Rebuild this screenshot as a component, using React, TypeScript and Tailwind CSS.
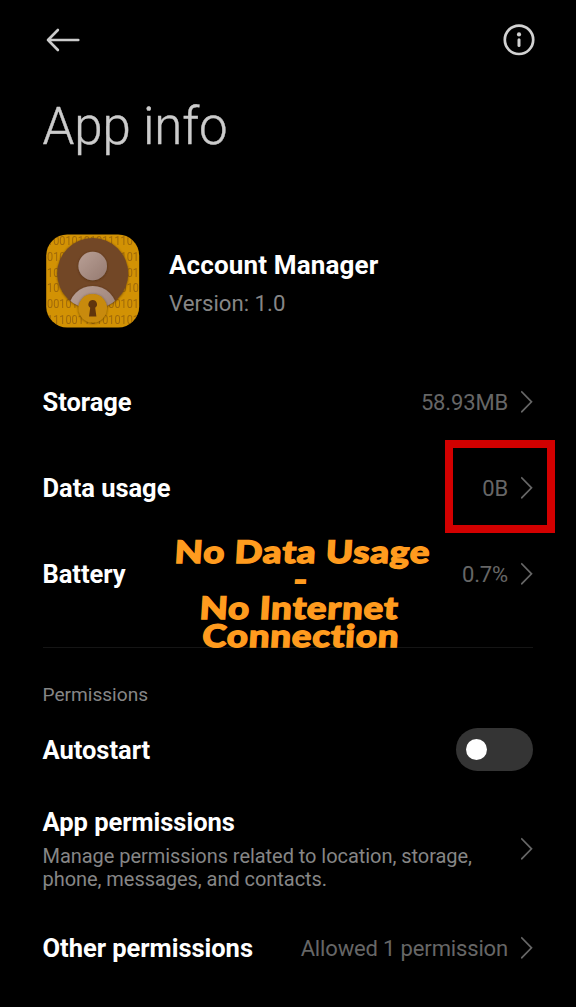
import type { ReactNode } from "react";

function Chevron() {
  return (
    <svg className="ml-[13px] h-6 w-3 shrink-0" viewBox="0 0 12 24" fill="none">
      <path d="M0.2 1.3 L10.5 11.8 L0.2 22.3" stroke="#666666" strokeWidth="1.7" />
    </svg>
  );
}

function BackArrow() {
  return (
    <svg className="h-6 w-[34px]" viewBox="0 0 34 24" fill="none">
      <path
        d="M32.3 12 H2 M11.9 2 L2 12 L11.9 22"
        stroke="#cccccc"
        strokeWidth="2.6"
        strokeLinecap="round"
        strokeLinejoin="round"
      />
    </svg>
  );
}

function InfoIcon() {
  return (
    <svg className="h-8 w-8" viewBox="0 0 32 32" fill="none">
      <circle cx="16" cy="15.8" r="14.2" stroke="#d2d2d2" strokeWidth="2.7" />
      <circle cx="16" cy="10.4" r="2.1" fill="#d2d2d2" />
      <path d="M16 15.8 V21.4" stroke="#d2d2d2" strokeWidth="3" strokeLinecap="round" />
    </svg>
  );
}

const binaryRows = [
  "100101010111101",
  "010110100101101",
  "101011010110101",
  "101001001011010",
  "001011010100101",
  "111001101010101",
];

function AppIcon() {
  return (
    <svg className="h-[94px] w-[94px] shrink-0" viewBox="0 0 94 94">
      <defs>
        <clipPath id="tile">
          <rect x="0.2" y="0.5" width="93" height="93" rx="21" />
        </clipPath>
        <clipPath id="disc">
          <circle cx="46.7" cy="39.5" r="35.5" />
        </clipPath>
        <linearGradient id="person" x1="0" y1="0" x2="1" y2="1">
          <stop offset="0" stopColor="#b9a096" />
          <stop offset="1" stopColor="#957a70" />
        </linearGradient>
        <filter id="shade" x="-20%" y="-20%" width="140%" height="140%">
          <feDropShadow dx="0" dy="0.5" stdDeviation="1.3" floodColor="#402000" floodOpacity="0.7" />
        </filter>
      </defs>
      <g clipPath="url(#tile)">
        <rect width="94" height="94" fill="#d29204" />
        <g fill="#94600c" fontFamily="Roboto, sans-serif" fontSize="13">
          {binaryRows.map((row, i) => (
            <text
              key={i}
              x="1"
              y={11.3 + i * 15.7}
              textLength="92"
              lengthAdjust="spacingAndGlyphs"
              opacity="0.8"
            >
              {row}
            </text>
          ))}
        </g>
        <circle cx="46.7" cy="39.5" r="35.5" fill="#724728" filter="url(#shade)" />
        <g clipPath="url(#disc)">
          <circle cx="46.7" cy="76" r="24" fill="url(#person)" filter="url(#shade)" />
        </g>
        <circle cx="46.7" cy="32" r="14.3" fill="url(#person)" filter="url(#shade)" />
        <circle cx="46.7" cy="74.3" r="14.3" fill="#c88a08" filter="url(#shade)" />
        <path
          d="M46.7 66 a4.3 4.3 0 0 1 2.5 7.8 l1.2 8.6 h-7.4 l1.2 -8.6 a4.3 4.3 0 0 1 2.5 -7.8 Z"
          fill="#60350d"
        />
      </g>
    </svg>
  );
}

function Label({ children }: { children: ReactNode }) {
  return (
    <span className="text-[25.5px] leading-[30px] font-bold tracking-[-0.03px] text-white">
      {children}
    </span>
  );
}

function Row({ label, value, children }: { label: string; value: string; children?: ReactNode }) {
  return (
    <div className="relative flex h-[86px] items-center">
      <Label>{label}</Label>
      <span className="ml-auto pt-px text-[22px] leading-[30px] tracking-[-0.15px] text-[#666666]">{value}</span>
      <Chevron />
      {children}
    </div>
  );
}

export default function App() {
  return (
    <main className="relative flex h-[1007px] w-[576px] flex-col overflow-hidden bg-black pr-[43px] pl-[42.5px] font-[Roboto,sans-serif] whitespace-nowrap">
      <header className="-mr-0.5 ml-[3px] flex h-[79px] items-center justify-between">
        <BackArrow />
        <InfoIcon />
      </header>
      <h1 className="mt-[17px] h-[138px] text-[51px] leading-[62px] font-light tracking-[-0.1px] text-[#cccccc] [-webkit-text-stroke:0.4px_#cccccc]">
        App info
      </h1>

      <section className="ml-[3px] flex h-[94px] gap-[29.5px]">
        <AppIcon />
        <div className="flex flex-col pt-4">
          <span className="text-[26px] leading-[30px] font-bold tracking-[0.15px] text-white">
            Account Manager
          </span>
          <span className="mt-2 text-[22.2px] leading-[30px] text-[#868686]">Version: 1.0</span>
        </div>
      </section>

      <section className="mt-[31px] h-[288px]">
        <Row label="Storage" value="58.93MB" />
        <Row label="Data usage" value="0B">
          <div className="absolute top-[-5px] right-[-22px] h-[93px] w-[110px] border-8 border-[#d20000]" />
        </Row>
        <Row label="Battery" value="0.7%" />
      </section>

      <section className="border-t border-[#151515]">
        <h2 className="mt-[35px] text-[19.1px] leading-[24px] text-[#868686]">Permissions</h2>
        <div className="mt-[21px] flex h-[43px] items-center justify-between">
          <Label>Autostart</Label>
          <button
            type="button"
            role="switch"
            aria-checked="false"
            aria-label="Autostart"
            className="flex h-[43px] w-[77.5px] items-center rounded-full bg-[#343434] pl-[10px]"
          >
            <span className="h-[21.5px] w-[21.5px] rounded-full bg-white" />
          </button>
        </div>
        <div className="mt-[36px] flex h-[83px] items-center justify-between">
          <div className="flex flex-col">
            <Label>App permissions</Label>
            <p className="mt-[8px] text-[20px] leading-[23px] tracking-[-0.05px] text-[#868686]">
              Manage permissions related to location, storage,
              <br />
              phone, messages, and contacts.
            </p>
          </div>
          <Chevron />
        </div>
        <div className="mt-[15px]">
          <Row label="Other permissions" value="Allowed 1 permission" />
        </div>
      </section>

      <div className="absolute top-[537px] left-[150px] flex w-[300px] -skew-x-3 scale-x-[1.18] flex-col items-center font-[Lato,sans-serif] text-[31px] leading-[28px] font-black tracking-[0.7px] text-[#ff9b1e] [font-variant-ligatures:none] [-webkit-text-stroke:1.3px_#ff9b1e]">
        <span>No Data Usage</span>
        <span>-</span>
        <span>No Internet</span>
        <span className="ml-1.5">Connection</span>
      </div>
    </main>
  );
}
